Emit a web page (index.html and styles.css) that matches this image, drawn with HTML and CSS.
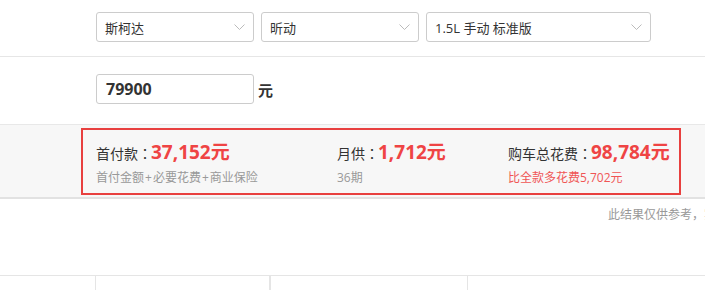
FILE: index.html
```html
<!DOCTYPE html>
<html lang="zh-CN">
<head>
<meta charset="utf-8">
<title>购车计算</title>
<link rel="stylesheet" href="styles.css">
</head>
<body>
<div class="page">
  <div class="row-car">
    <div class="select s1"><span>斯柯达</span><svg class="chev" width="11" height="6" viewBox="0 0 11 6"><polyline points="0.5,0.5 5.5,5.5 10.5,0.5" fill="none" stroke="#bbb" stroke-width="1"/></svg></div>
    <div class="select s2"><span>昕动</span><svg class="chev" width="11" height="6" viewBox="0 0 11 6"><polyline points="0.5,0.5 5.5,5.5 10.5,0.5" fill="none" stroke="#bbb" stroke-width="1"/></svg></div>
    <div class="select s3"><span>1.5L 手动 标准版</span><svg class="chev" width="11" height="6" viewBox="0 0 11 6"><polyline points="0.5,0.5 5.5,5.5 10.5,0.5" fill="none" stroke="#bbb" stroke-width="1"/></svg></div>
  </div>
  <div class="row-price">
    <div class="input">79900</div><span class="unit">元</span>
  </div>
  <div class="band">
    <div class="result">
      <div class="col">
        <div class="main"><span class="label">首付款<span class="colon" lang="zh-TW">：</span></span><span class="value">37,152元</span></div>
        <div class="sub">首付金额<span class="plus">+</span>必要花费<span class="plus">+</span>商业保险</div>
      </div>
      <div class="col">
        <div class="main"><span class="label">月供<span class="colon" lang="zh-TW">：</span></span><span class="value">1,712元</span></div>
        <div class="sub">36期</div>
      </div>
      <div class="col">
        <div class="main"><span class="label">购车总花费<span class="colon" lang="zh-TW">：</span></span><span class="value">98,784元</span></div>
        <div class="sub red">比全款多花费5,702元</div>
      </div>
    </div>
  </div>
  <div class="note">此结果仅供参考，实际费用以当地经销商报价为准</div>
  <div class="table">
    <div class="cell"></div>
    <div class="cell line"></div>
    <div class="cell line2"></div>
    <div class="cell line"></div>
  </div>
</div>
</body>
</html>
```

FILE: styles.css
```css
html, body {
  margin: 0;
  padding: 0;
}
body {
  width: 705px;
  height: 290px;
  overflow: hidden;
  background: #fff;
  color: #333;
  font-family: "Open Sans", "Noto Sans CJK SC", sans-serif;
}
.page {
  width: 705px;
}
.row-car {
  display: flex;
  gap: 7px;
  padding: 12px 0 14px 96px;
  border-bottom: 1px solid #e6e6e6;
}
.select {
  box-sizing: border-box;
  height: 30px;
  border: 1px solid #ccc;
  border-radius: 3px;
  display: flex;
  align-items: center;
  justify-content: space-between;
  padding: 0 8px 0 8px;
  font-size: 13px;
  color: #333;
  background: #fff;
}
.s1, .s2 { width: 158px; }
.s3 { width: 225px; }
.chev { display: block; }
.row-price {
  display: flex;
  align-items: center;
  padding: 17px 0 20px 96px;
}
.input {
  box-sizing: border-box;
  width: 158px;
  height: 30px;
  border: 1px solid #ccc;
  border-radius: 3px;
  padding-left: 9px;
  display: flex;
  align-items: center;
  font-size: 16px;
  font-weight: bold;
  color: #333;
}
.unit {
  margin-left: 4px;
  font-size: 15px;
  font-weight: bold;
  color: #333;
}
.band {
  background: #f7f7f7;
  border-top: 1px solid #e8e8e8;
  border-bottom: 2px solid #e2e2e2;
  padding: 3px 0 2px 81px;
}
.result {
  box-sizing: border-box;
  width: 600px;
  height: 67px;
  border: 2px solid #e8403f;
  padding: 9px 0 0 13px;
  display: grid;
  grid-template-columns: 241px 171px auto;
}
.main {
  height: 26px;
  line-height: 26px;
  white-space: nowrap;
}
.label {
  font-size: 14px;
  color: #333;
}
.colon {
  font-family: "Noto Sans CJK TC", "Noto Sans CJK SC", sans-serif;
}
.value {
  font-size: 19px;
  font-weight: bold;
  color: #ef4444;
  margin-left: -1px;
}
.sub {
  margin-top: 5px;
  font-size: 12px;
  line-height: 16px;
  color: #999;
  white-space: nowrap;
}
.plus {
  margin: 0 1px;
}
.sub.red {
  color: #f05555;
}
.note {
  box-sizing: border-box;
  height: 76px;
  padding: 8px 0 0 608px;
  font-size: 12px;
  line-height: 16px;
  color: #999;
  white-space: nowrap;
}
.table {
  display: grid;
  grid-template-columns: 95px 174px 198px 1fr;
  height: 15px;
  border-top: 1px solid #e5e5e5;
}
.cell.line {
  border-left: 1px solid #e5e5e5;
}
.cell.line2 {
  border-left: 2px solid #e5e5e5;
}
```
